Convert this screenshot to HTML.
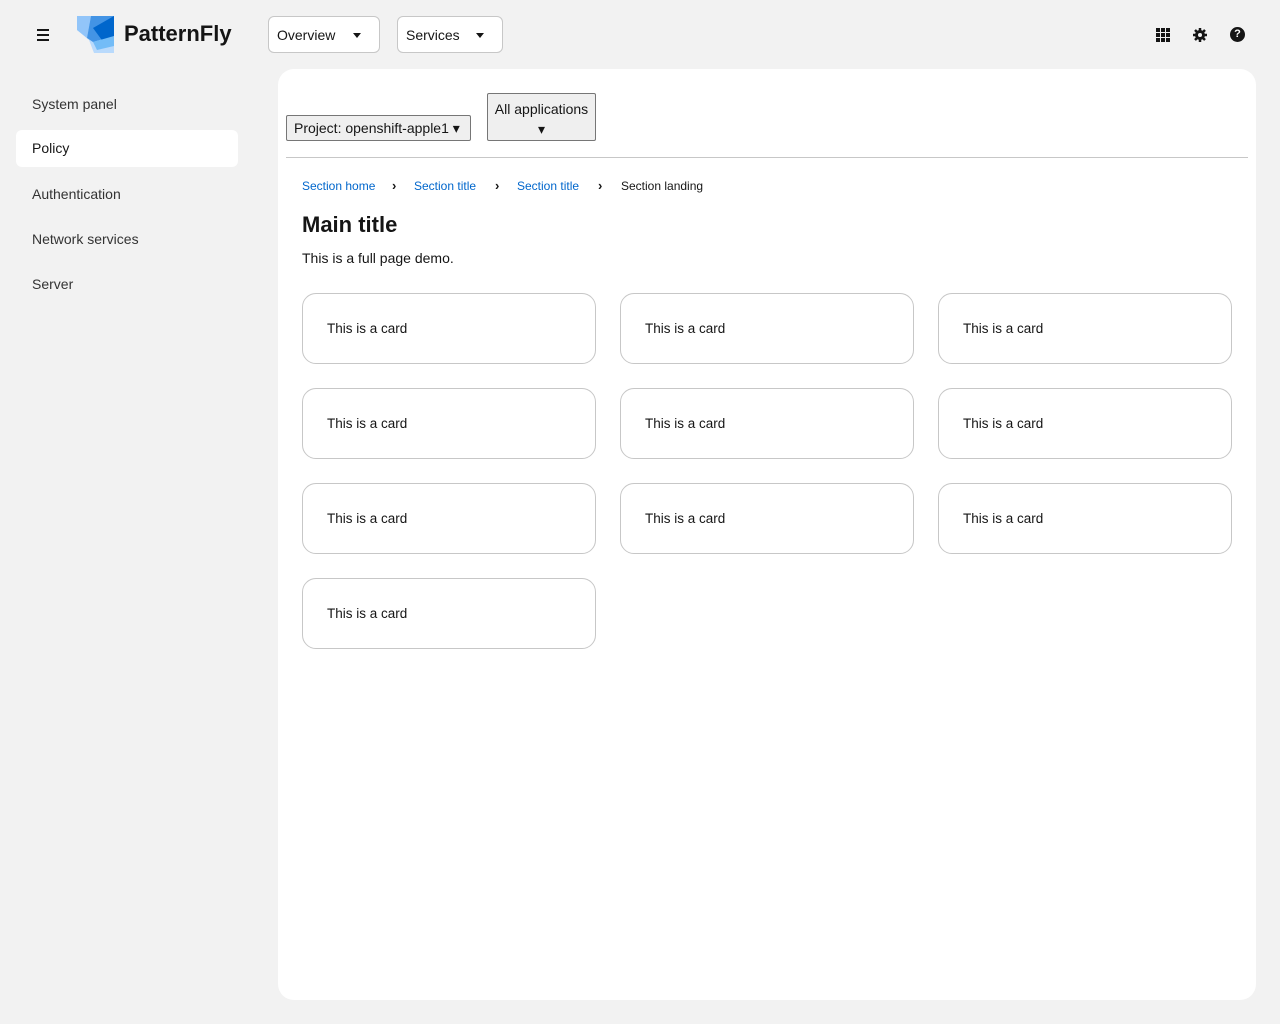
<!DOCTYPE html>
<html><head><meta charset="utf-8"><style>
*{box-sizing:border-box;margin:0;padding:0}
body{width:1280px;height:1024px;background:#f2f2f2;font-family:"Liberation Sans",sans-serif;color:#151515;position:relative;overflow:hidden}
.abs{position:absolute}
.tb{position:absolute;top:16px;height:37px;background:#fff;border:1px solid #c7c7c7;border-radius:6px;font-size:14px;padding:10px 0 0 8px}
.tb:after{content:"";position:absolute;right:18px;top:16px;border:4px solid transparent;border-top:5px solid #151515}
.nav{position:absolute;left:16px;width:222px;height:37px;font-size:14px;padding:10px 16px;color:#333;border-radius:6px}
.main{position:absolute;left:278px;top:69px;width:978px;height:931px;background:#fff;border-radius:16px}
.card{position:absolute;width:294px;height:71px;border:1px solid #c7c7c7;border-radius:14px;font-size:13.5px;padding:27px 24px}
.bc{position:absolute;top:179px;font-size:12px;color:#0066cc}
.sep{position:absolute;top:178px;font-size:13px;font-weight:bold}
</style></head><body>
<div class="abs" style="left:37px;top:29px;width:12px;height:2px;background:#151515;box-shadow:0 5px 0 #151515,0 10px 0 #151515"></div>
<svg class="abs" style="left:77px;top:16px" width="38" height="37" viewBox="0 0 38 37">
<path d="M0 0H37V37H17L12 24L0 14Z" fill="#b9dafc"/>
<path d="M0 0H14L10 22L0 14Z" fill="#92c5f9"/>
<path d="M14 0H37V20L16 26L10 22Z" fill="#4394e5"/>
<path d="M37 0L16 12L27 27L37 20Z" fill="#0066cc"/>
<path d="M16 26L37 20V30L20 34Z" fill="#73bcf7"/></svg>
<div class="abs" style="left:124px;top:21px;font-size:22px;font-weight:bold">PatternFly</div>
<div class="tb" style="left:268px;width:112px">Overview</div>
<div class="tb" style="left:397px;width:106px">Services</div>
<svg class="abs" style="left:1156px;top:28px" width="14" height="14"><g fill="#151515"><rect x="0" y="0" width="4" height="4"/><rect x="5" y="0" width="4" height="4"/><rect x="10" y="0" width="4" height="4"/><rect x="0" y="5" width="4" height="4"/><rect x="5" y="5" width="4" height="4"/><rect x="10" y="5" width="4" height="4"/><rect x="0" y="10" width="4" height="4"/><rect x="5" y="10" width="4" height="4"/><rect x="10" y="10" width="4" height="4"/></g></svg>
<svg class="abs" style="left:1193px;top:28px" width="14" height="14" viewBox="0 0 14 14"><circle cx="7" cy="7" r="5" fill="#151515"/><g stroke="#151515" stroke-width="2.5"><line x1="7" y1="0" x2="7" y2="14"/><line x1="0" y1="7" x2="14" y2="7"/><line x1="2" y1="2" x2="12" y2="12"/><line x1="12" y1="2" x2="2" y2="12"/></g><circle cx="7" cy="7" r="2" fill="#f2f2f2"/></svg>
<div class="abs" style="left:1230px;top:27px;width:15px;height:15px;border-radius:50%;background:#151515;color:#fff;font-size:11px;font-weight:bold;text-align:center;line-height:15px">?</div>
<div class="nav" style="top:86px">System panel</div>
<div class="nav" style="top:130px;background:#fff;color:#151515">Policy</div>
<div class="nav" style="top:176px">Authentication</div>
<div class="nav" style="top:221px">Network services</div>
<div class="nav" style="top:266px">Server</div>
<div class="main"></div>
<div class="abs" style="left:286px;top:115px;width:185px;height:26px;background:#efefef;border:1px solid #767676;border-radius:2px;font-size:14px;padding:4px 7px">Project: openshift-apple1 ▾</div>
<div class="abs" style="left:487px;top:93px;width:109px;height:48px;background:#efefef;border:1px solid #767676;border-radius:2px;font-size:14px;text-align:center;padding-top:5px;line-height:20px">All applications<br>▾</div>
<div class="abs" style="left:286px;top:157px;width:962px;height:1px;background:#c7c7c7"></div>
<div class="bc" style="left:302px">Section home</div><div class="sep" style="left:392px">›</div>
<div class="bc" style="left:414px">Section title</div><div class="sep" style="left:495px">›</div>
<div class="bc" style="left:517px">Section title</div><div class="sep" style="left:598px">›</div>
<div class="bc" style="left:621px;color:#151515">Section landing</div>
<div class="abs" style="left:302px;top:212px;font-size:22px;font-weight:bold">Main title</div>
<div class="abs" style="left:302px;top:250px;font-size:14px">This is a full page demo.</div>
<div class="card" style="left:302px;top:293px">This is a card</div>
<div class="card" style="left:620px;top:293px">This is a card</div>
<div class="card" style="left:938px;top:293px">This is a card</div>
<div class="card" style="left:302px;top:388px">This is a card</div>
<div class="card" style="left:620px;top:388px">This is a card</div>
<div class="card" style="left:938px;top:388px">This is a card</div>
<div class="card" style="left:302px;top:483px">This is a card</div>
<div class="card" style="left:620px;top:483px">This is a card</div>
<div class="card" style="left:938px;top:483px">This is a card</div>
<div class="card" style="left:302px;top:578px">This is a card</div>
</body></html>
